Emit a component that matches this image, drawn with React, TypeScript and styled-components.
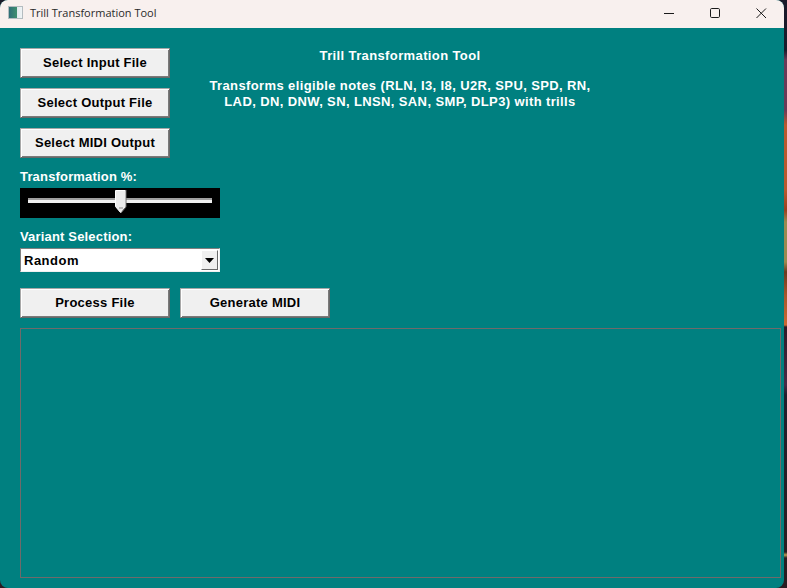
import styled, { createGlobalStyle } from "styled-components";

const GlobalStyle = createGlobalStyle`
  html, body {
    margin: 0;
    padding: 0;
    width: 787px;
    height: 588px;
    overflow: hidden;
  }
  * {
    box-sizing: border-box;
  }
`;

const App = () => {
  return (
    <>
      <GlobalStyle />
      <Desktop>
        <Window>
          <TitleBar>
            <AppIcon />
            <TitleText>Trill Transformation Tool</TitleText>
            <WindowControls>
              <ControlButton aria-label="Minimize">
                <svg width="12" height="12" viewBox="0 0 12 12">
                  <path d="M1 6.5h10" stroke="#1a1a1a" strokeWidth="1" />
                </svg>
              </ControlButton>
              <ControlButton aria-label="Maximize">
                <svg width="12" height="12" viewBox="0 0 12 12">
                  <rect x="1.5" y="1.5" width="9" height="9" rx="1.2" fill="none" stroke="#1a1a1a" />
                </svg>
              </ControlButton>
              <ControlButton aria-label="Close">
                <svg width="12" height="12" viewBox="0 0 12 12">
                  <path d="M1.5 1.5l9.5 9.5M11 1.5l-9.5 9.5" stroke="#1a1a1a" strokeWidth="1" />
                </svg>
              </ControlButton>
            </WindowControls>
          </TitleBar>
          <Content>
            <TopRow>
              <ButtonColumn>
                <ActionButton>Select Input File</ActionButton>
                <ActionButton>Select Output File</ActionButton>
                <ActionButton>Select MIDI Output</ActionButton>
              </ButtonColumn>
              <Intro>
                <IntroTitle>Trill Transformation Tool</IntroTitle>
                <IntroText>
                  Transforms eligible notes (RLN, I3, I8, U2R, SPU, SPD, RN,
                  <br />
                  LAD, DN, DNW, SN, LNSN, SAN, SMP, DLP3) with trills
                </IntroText>
              </Intro>
            </TopRow>
            <FieldLabel>Transformation %:</FieldLabel>
            <SliderBox>
              <SliderTrack />
              <SliderThumb>
                <svg width="12" height="24" viewBox="0 0 12 24">
                  <path d="M0.5 0.5h10v16l-5 6-5-6z" fill="#ececec" stroke="#fff" />
                  <path d="M11 0v17l-5 6" fill="none" stroke="#696969" />
                  <path d="M4 18h4" stroke="#8a8a8a" />
                </svg>
              </SliderThumb>
            </SliderBox>
            <FieldLabel>Variant Selection:</FieldLabel>
            <ComboBox>
              <ComboValue>Random</ComboValue>
              <ComboArrow>
                <svg width="9" height="5" viewBox="0 0 9 5">
                  <path d="M0 0h9L4.5 5z" fill="#000" />
                </svg>
              </ComboArrow>
            </ComboBox>
            <ActionRow>
              <ActionButton>Process File</ActionButton>
              <ActionButton>Generate MIDI</ActionButton>
            </ActionRow>
            <LogBox />
          </Content>
        </Window>
      </Desktop>
    </>
  );
};

const Desktop = styled.div`
  width: 787px;
  height: 588px;
  background: linear-gradient(
    to bottom,
    #1a1a2a 0,
    #1a1a2a 50px,
    #6a3a58 60px,
    #6a3a58 110px,
    #b85a30 125px,
    #b85a30 190px,
    #9a4020 210px,
    #9a8a50 222px,
    #9a8a50 262px,
    #6a3a20 272px,
    #a5562c 295px,
    #c96a35 325px,
    #301a28 327px,
    #4a2a48 385px,
    #221c2c 395px,
    #2b1c22 552px,
    #b59a58 555px,
    #2b1c22 558px
  );
`;

const Window = styled.div`
  display: flex;
  flex-direction: column;
  width: 784px;
  height: 588px;
  border-radius: 8px;
  overflow: hidden;
  background-color: #008080;
`;

const TitleBar = styled.div`
  display: flex;
  align-items: center;
  flex: 0 0 28px;
  padding: 0 0 3px 8px;
  background-color: #f8f0ee;
`;

const AppIcon = styled.div`
  width: 15px;
  height: 13px;
  border: 1px solid #b4bcc0;
  background: linear-gradient(to right, #2f6f78 0, #3f8f70 60%, #dfe8ec 60%, #f0f4f6 100%);
`;

const TitleText = styled.span`
  margin-left: 7px;
  font-family: "Open Sans", "Noto Sans", sans-serif;
  font-size: 11px;
  color: #2a2a2a;
`;

const WindowControls = styled.div`
  display: flex;
  margin-left: auto;
`;

const ControlButton = styled.div`
  display: flex;
  align-items: center;
  justify-content: center;
  width: 46px;
  height: 24px;
`;

const Content = styled.div`
  display: flex;
  flex-direction: column;
  flex: 1;
  padding: 20px 3px 10px 20px;
`;

const TopRow = styled.div`
  display: flex;
`;

const ButtonColumn = styled.div`
  display: flex;
  flex-direction: column;
  gap: 10px;
`;

const ActionButton = styled.div`
  display: flex;
  align-items: center;
  justify-content: center;
  width: 150px;
  height: 30px;
  padding-bottom: 1px;
  background-color: #f0f0f0;
  border: 1px solid;
  border-color: #a8a8a8 #696969 #696969 #a8a8a8;
  box-shadow: inset 1px 1px #ffffff, inset -1px -1px #7a7a7a;
  font-family: "Liberation Sans", Arial, sans-serif;
  font-size: 13px;
  font-weight: 700;
  letter-spacing: 0.25px;
  color: #000;
`;

const Intro = styled.div`
  width: 460px;
  text-align: center;
  font-family: "Liberation Sans", Arial, sans-serif;
  font-size: 13px;
  font-weight: 700;
  letter-spacing: 0.38px;
  color: #fff;
`;

const IntroTitle = styled.div`
  line-height: 16px;
`;

const IntroText = styled.div`
  margin-top: 14px;
  line-height: 16px;
`;

const FieldLabel = styled.div`
  margin-top: 10px;
  height: 20px;
  line-height: 17px;
  font-family: "Liberation Sans", Arial, sans-serif;
  font-size: 13px;
  font-weight: 700;
  letter-spacing: 0.17px;
  color: #fff;
`;

const SliderBox = styled.div`
  position: relative;
  display: flex;
  align-items: center;
  justify-content: center;
  width: 200px;
  height: 30px;
  background-color: #000;
`;

const SliderTrack = styled.div`
  width: 184px;
  height: 5px;
  margin-top: -6px;
  background-color: #f0f0f0;
  border-top: 2px solid #a0a0a0;
`;

const SliderThumb = styled.div`
  position: absolute;
  top: 2px;
  left: 95px;
  display: flex;
`;

const ComboBox = styled.div`
  display: flex;
  align-items: center;
  width: 200px;
  height: 24px;
  padding: 1px 1px 1px 2px;
  background-color: #fff;
  border: 1px solid;
  border-color: #808080 #f0f0f0 #f0f0f0 #808080;
`;

const ComboValue = styled.div`
  flex: 1;
  padding-left: 1px;
  font-family: "Liberation Sans", Arial, sans-serif;
  font-size: 13px;
  font-weight: 700;
  letter-spacing: 0.5px;
  color: #000;
`;

const ComboArrow = styled.div`
  display: flex;
  align-items: center;
  justify-content: center;
  width: 17px;
  height: 20px;
  background-color: #f0f0f0;
  border: 1px solid;
  border-color: #ffffff #696969 #696969 #ffffff;
`;

const ActionRow = styled.div`
  display: flex;
  gap: 10px;
  margin-top: 16px;
`;

const LogBox = styled.div`
  flex: 1;
  margin-top: 10px;
  border: 1px solid #6f6a6a;
`;

export default App;
